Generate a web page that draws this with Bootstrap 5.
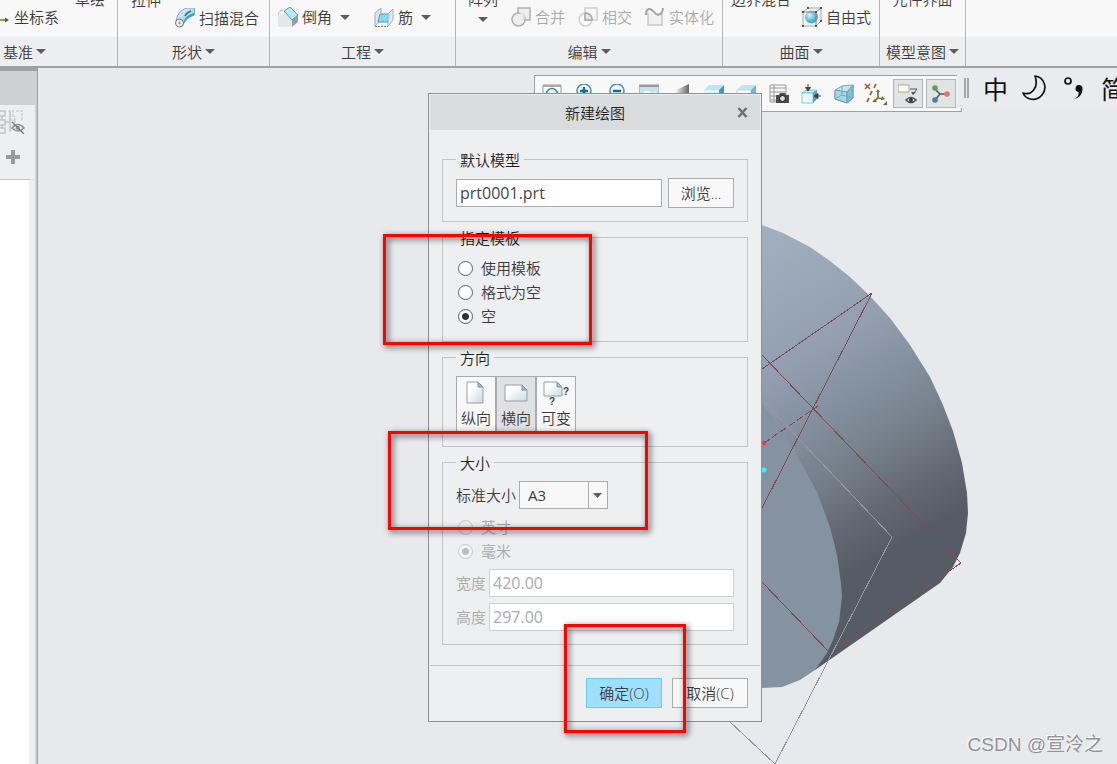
<!DOCTYPE html>
<html lang="zh-CN">
<head>
<meta charset="utf-8">
<meta name="viewport" content="width=device-width, initial-scale=1">
<title>新建绘图</title>
<link href="https://cdn.jsdelivr.net/npm/bootstrap@5.3.0/dist/css/bootstrap.min.css" rel="stylesheet">
<style>
  body { font: 350 15px/22px "Open Sans", "Noto Sans CJK SC", sans-serif; color: #3c3c3e; background: #e8e9ed; }
  button { font: inherit; color: inherit; }
  svg { flex: none; display: block; }

  /* ribbon */
  .ribbon { background: #f8f8f8; border-bottom: 2px solid #a0a0a2; font-family: "Noto Sans CJK SC", sans-serif; white-space: nowrap; }
  .ribbon-group { border-right: 1px solid #b4b5b7; flex: none; }
  .ribbon-tools { height: 37px; padding-bottom: 9px; overflow: hidden; }
  .ribbon-title { height: 29px; background: #edeef0; width: 100%; }
  .ribbon button { border: 0; padding: 0; background: none; display: flex; align-items: center; justify-content: center; height: 22px; gap: 4px; }
  .ribbon button.ribbon-title { height: 29px; background: #edeef0; gap: 3px; }
  .ribbon button.ribbon-first { justify-content: flex-start; padding-left: 3px; }
  .ribbon button.ribbon-cut { height: 14px; margin-bottom: 22px; }
  .ribbon button.ribbon-arrowed { gap: 8px; }
  .ribbon button:disabled { color: #a9aaab; }
  .tools-pad { padding: 0 10px 0 13px; }
  .w-datum { width: 118px; } .w-shape { width: 152px; } .w-eng { width: 186px; }
  .w-edit { width: 267px; } .w-surf { width: 157px; } .w-intent { width: 86px; }
  .caret { width: 0; height: 0; border: 5px solid transparent; border-top: 5px solid #5c5d5f; border-bottom: 0; }

  /* work area */
  .stage { flex: 1 0 auto; min-height: 696px; }
  .tree-panel { width: 38px; border-right: 1px solid #a0a1a3; background: #cfd0d2; border-top: 3px solid #a0a0a2; }
  .tree-tools { height: 74px; margin-top: 34px; margin-right: 2px; background: #eeeff1; padding-top: 5px; }
  .tree-tools button { border: 0; padding: 0; background: none; }
  .tree-list { margin-right: 2px; border-right: 6px solid #eeeff1; background: #fff; border-top: 1px solid #c6c7c9; }
  .viewport { overflow: hidden; }
  .model { position: absolute; left: 0; top: 0; }
  .view-bar { position: absolute; left: 496px; top: 7px; width: 428px; height: 37px; background: #f8f8f8; border: 1px solid #a0a0a2; padding: 0 5px 0 2px; }
  .view-bar button { border: 1px solid transparent; background: none; padding: 0; width: 30px; height: 29px; display: flex; align-items: center; justify-content: center; }
  .view-bar button.is-on { background: #e2e3e5; border-color: #b4b5b7; }
  .ime-bar { position: absolute; left: 919px; right: 0; top: 2px; height: 38px; background: #eaebee; color: #111; font: 400 25px/38px "Noto Sans CJK SC", sans-serif; overflow: hidden; white-space: nowrap; padding: 0 0 3px 7px; }
  .ime-grip { width: 5px; height: 20px; border: solid #a6a7a9; border-width: 0 2px; }
  .ime-gap { margin-left: 14px; }
  .stamp { position: absolute; right: 14px; bottom: 8px; font: 400 19px/22px "Liberation Sans", "Noto Sans CJK SC", sans-serif; color: #929398; text-shadow: -1px -1px 0 #fff; }

  /* dialog */
  .draw-dialog { position: absolute; left: 390px; top: 25px; width: 334px; background: #eeeff1; border: 1px solid #8f9193; padding: 1px; }
  .dialog-title { height: 35px; background: #d9dcdd; color: #1e1e20; font-size: 15px; position: relative; }
  .dialog-close { position: absolute; right: 12px; top: 12px; border: 0; padding: 0; background: none; }
  .dialog-body { padding: 18px 12px 20px; }
  .option-box { border: 1px solid #c3c5c8; padding: 8px 13px 13px; margin: 0 0 4px; }
  .option-box:last-child { margin-bottom: 0; }
  .option-box legend { float: none; width: auto; padding: 2px 4px 0; margin: 0; font-size: 15px; line-height: 20px; color: #1e1e20; }
  .field { height: 28px; border: 1px solid #a9abad; border-radius: 0; padding: 0 3px; font: 400 16px/26px "Open Sans", sans-serif; color: #46474a; min-width: 0; background: #fff; }
  .field:disabled { border-color: #cfd0d2; color: #a9aaab; background: #fff; }
  .push { height: 30px; border: 1px solid #a9abad; border-radius: 0; background: #f8f8f8; padding: 0; color: #3c3c3e; }
  .push-ok { background: #a0e0ff; border-color: #68ccf8; }
  .w-browse { width: 66px; margin-left: 6px; } .w-action { width: 76px; }
  .pick { height: 24px; gap: 8px; padding-left: 2px; }
  .pick input { appearance: none; width: 15px; height: 15px; margin: 0; border: 1px solid #5c5d5f; border-radius: 50%; background: #fff; flex: none; }
  .pick input:checked { background: radial-gradient(circle, #333 0 3px, #fff 4px); }
  .pick input:disabled { border-color: #c6c7c9; background: #eeeff1; }
  .pick input:disabled:checked { background: radial-gradient(circle, #bcbdbf 0 3px, #f4f4f6 4px); }
  .is-dim { color: #a9aaab; }
  .orient button { width: 40px; height: 57px; border: 1px solid #a9abad; background: #f8f8f8; padding: 3px 0 0; display: flex; flex-direction: column; align-items: center; gap: 1px; }
  .orient button.is-on { background: #e0e1e3; }
  .size-row { gap: 3px; }
  .size-row + .size-row { margin-top: 6px; }
  .size-top { gap: 3px; margin-bottom: 6px; }
  .size-values { margin-top: 6px; }
  .paper { width: 89px; height: 28px; appearance: none; border: 1px solid #a9abad; border-radius: 0; font: 400 15px/26px "Open Sans", sans-serif; color: #3c3c3e; padding: 0 20px 0 8px;
    background: #f8f8f8 url("data:image/svg+xml,%3Csvg xmlns='http://www.w3.org/2000/svg' width='19' height='26'%3E%3Cpath d='M0 0h1v26H0z' fill='%23a9abad'/%3E%3Cpath d='M5 11h9l-4.500 5z' fill='%235c5d5f'/%3E%3C/svg%3E") right top no-repeat; }
  .dialog-actions { border-top: 1px solid #c3c5c8; padding: 12px; gap: 10px; }

  /* callout frames */
  .callout { position: absolute; border: 3px solid #f00; filter: drop-shadow(2px 2px 3px rgba(0,0,0,.75)); pointer-events: none; }
  .callout-template { left: 345px; top: 166px; width: 209px; height: 111px; }
  .callout-size { left: 350px; top: 363px; width: 260px; height: 99px; }
  .callout-ok { left: 526px; top: 556px; width: 122px; height: 109px; }
</style>
</head>
<body class="d-flex flex-column min-vh-100 overflow-hidden">

<svg width="0" height="0" class="position-absolute" aria-hidden="true">
  <defs>
    <linearGradient id="ice" x1="0" y1="0" x2="1" y2="1"><stop offset="0" stop-color="#e4f7fd"/><stop offset="1" stop-color="#7cc3de"/></linearGradient>
    <linearGradient id="sheet" x1="0" y1="0" x2="1" y2="1"><stop offset=".3" stop-color="#fff"/><stop offset="1" stop-color="#c4dbe5"/></linearGradient>
    <linearGradient id="metal" x1="0" y1="0" x2="1" y2="0"><stop offset="0" stop-color="#eee"/><stop offset="1" stop-color="#666"/></linearGradient>
    <radialGradient id="ball" cx=".35" cy=".35"><stop offset="0" stop-color="#d8f5ff"/><stop offset="1" stop-color="#4bb0d6"/></radialGradient>
  </defs>
</svg>

<header class="ribbon d-flex overflow-hidden">
  <section class="ribbon-group w-datum">
    <div class="ribbon-tools d-flex align-items-end">
      <button type="button"><svg width="10" height="20" viewBox="0 0 10 20"><path d="M0 13H6" stroke="#8a6d2f" stroke-width="1.500"/><path d="M5 10.500L9 13 5 15.500z" fill="#6a531f"/></svg>坐标系</button>
      <button type="button" class="ribbon-cut ms-3">草绘</button>
    </div>
    <button type="button" class="ribbon-title ribbon-first">基准<span class="caret"></span></button>
  </section>
  <section class="ribbon-group w-shape">
    <div class="ribbon-tools tools-pad d-flex align-items-end justify-content-between pb-2">
      <button type="button" class="ribbon-cut">拉伸</button>
      <button type="button"><svg width="20" height="20" viewBox="0 0 20 20"><path d="M1 13C2 6 7 0 14 0h5.500v6C14 7 11 11 8 17z" fill="url(#ice)" stroke="#7fb0c4"/><path d="M8 15C10 9 14 6 19.500 5v2.500C14 9 11 12 8 17z" fill="#4a9dbf"/><path d="M10 8c1-2 3-4 6-5" fill="none" stroke="#2f6f8b" stroke-width="1.500"/><circle cx="4.500" cy="15" r="4" fill="#f2f2f2" stroke="#777"/><path d="M4.500 13.500v3M3 15h3" stroke="#888" stroke-width=".8"/></svg>扫描混合</button>
    </div>
    <button type="button" class="ribbon-title">形状<span class="caret"></span></button>
  </section>
  <section class="ribbon-group w-eng">
    <div class="ribbon-tools d-flex align-items-end justify-content-between ps-2 pe-4">
      <button type="button" class="ribbon-arrowed"><span class="d-flex align-items-center gap-1"><svg width="20" height="20" viewBox="0 0 20 20"><path d="M0 7h9l5 6v7H0z" fill="#e5e6e7"/><path d="M14 13l6-5v7l-6 5z" fill="#9b9da0"/><path d="M6 4l6-4 8 8-6 5z" fill="#b4eafb" stroke="#4d9dba"/><path d="M0 7L3 3M3 3h2" stroke="#aaa" stroke-dasharray="2 1"/></svg>倒角</span><span class="caret"></span></button>
      <button type="button" class="ribbon-arrowed"><span class="d-flex align-items-center gap-1"><svg width="20" height="20" viewBox="0 0 20 20"><path d="M1 6l6-5v12l-6 6z" fill="#dfe5e8" stroke="#a5b0b5"/><path d="M6 7h11l-3 8H4z" fill="#85d9f3" stroke="#4b9dbd"/><path d="M14 7l5-5v11l-5 6z" fill="#d9eef5" fill-opacity=".8" stroke="#a5b0b5"/><path d="M1 19.500h13" stroke="#777" stroke-dasharray="2 1"/></svg>筋</span><span class="caret"></span></button>
    </div>
    <button type="button" class="ribbon-title">工程<span class="caret"></span></button>
  </section>
  <section class="ribbon-group w-edit">
    <div class="ribbon-tools d-flex align-items-end justify-content-between px-2">
      <div class="d-flex flex-column align-items-center ms-1">
        <button type="button" class="ribbon-cut mb-0">阵列</button>
        <button type="button" aria-label="阵列选项"><span class="caret mt-1"></span></button>
      </div>
      <button type="button" disabled><svg width="20" height="20" viewBox="0 0 20 20" fill="#eee" stroke="#b0b0b0" stroke-width="1.500"><path d="M7 1h12v12H7z"/><circle cx="7.500" cy="12.500" r="6.500"/><path d="M8 7h5v5" stroke="#ddd"/></svg>合并</button>
      <button type="button" disabled><svg width="20" height="20" viewBox="0 0 20 20" fill="none" stroke="#d0d0d0" stroke-width="1.500"><path d="M7 1h12v12H7z"/><circle cx="7.500" cy="12.500" r="6.500"/><path d="M7 6a6.500 6.500 0 0 1 7 7H7z" fill="#e4e4e4" stroke="#aaa"/></svg>相交</button>
      <button type="button" disabled><svg width="20" height="20" viewBox="0 0 20 20"><path d="M3 6v12h14V5" fill="#f0f0f0" stroke="#c8c8c8" stroke-width="1.500"/><path d="M1 8C1 0 6 1 9 5s8 4 9-4" fill="none" stroke="#a2a2a2" stroke-width="2"/></svg>实体化</button>
    </div>
    <button type="button" class="ribbon-title">编辑<span class="caret"></span></button>
  </section>
  <section class="ribbon-group w-surf">
    <div class="ribbon-tools d-flex align-items-end justify-content-between px-2">
      <button type="button" class="ribbon-cut">边界混合</button>
      <button type="button"><svg width="20" height="20" viewBox="0 0 20 20"><path d="M1 5l5-4h13v13l-5 5H1z" fill="#f4f4f4" stroke="#aaa"/><circle cx="9.500" cy="10" r="6.500" fill="url(#ball)"/><path d="M1 5h13v14M14 5l5-4" fill="none" stroke="#888"/><path d="M0 4h2v2H0zM13 4h2v2h-2zM18 0h2v2h-2zM5 0h2v2H5zM0 18h2v2H0zM13 18h2v2h-2zM18 13h2v2h-2z" fill="#555"/></svg>自由式</button>
    </div>
    <button type="button" class="ribbon-title">曲面<span class="caret"></span></button>
  </section>
  <section class="ribbon-group w-intent">
    <div class="ribbon-tools d-flex align-items-end justify-content-center">
      <button type="button" class="ribbon-cut">元件界面</button>
    </div>
    <button type="button" class="ribbon-title">模型意图<span class="caret"></span></button>
  </section>
  <div class="flex-grow-1 d-flex flex-column"><div class="ribbon-tools"></div><div class="ribbon-title"></div></div>
</header>

<main class="stage d-flex">
  <aside class="tree-panel d-flex flex-column flex-shrink-0">
    <div class="tree-tools d-flex flex-column align-items-start gap-3">
      <button type="button" aria-label="显示"><svg width="25" height="24" viewBox="0 0 25 24" fill="none"><path d="M0 1h5v5H0M0 10h5v5H0M0 18h5v5H0M2 6v4M2 15v3M5 12h5M10 1v21" stroke="#c2c3c5" stroke-width="1.500"/><path d="M8 1h5v6M16 1h6v10M10 10h5v-4M15 10v10" stroke="#d0d1d3" stroke-width="1.500" stroke-dasharray="3 1"/><path d="M12 18q6-7 12 0-6 6-12 0z" stroke="#8e9092" stroke-width="1.500"/><circle cx="18" cy="18" r="2" fill="#8e9092"/><path d="M12 12l12 12" stroke="#77797b" stroke-width="1.200"/></svg></button>
      <button type="button" class="ms-1" aria-label="添加"><svg width="18" height="14" viewBox="0 0 18 14"><path d="M9 0v14M2 7h14" stroke="#98999b" stroke-width="4"/></svg></button>
    </div>
    <div class="tree-list flex-grow-1"></div>
  </aside>

  <div class="viewport flex-grow-1 position-relative">
    <svg class="model" width="1079" height="696" viewBox="38 68 1079 696" role="img" aria-label="模型">
      <defs>
        <linearGradient id="side" gradientUnits="userSpaceOnUse" x1="770" y1="240" x2="934" y2="524">
          <stop offset="0" stop-color="#a0aebd"/><stop offset=".36" stop-color="#939fb1"/><stop offset=".62" stop-color="#7c8995"/><stop offset=".74" stop-color="#717c87"/><stop offset=".87" stop-color="#646874"/><stop offset="1" stop-color="#565c66"/>
        </linearGradient>
      </defs>
      <path fill="url(#side)" d="M700 210L762 225L783 233L810 247L830 261L850 277L870 296L890 318L910 345L930 377L943 405L953 431L962 463L967 493L968 513L966 533L960 553L953 567L940 583L815 670L700 670z"/>
      <path fill="#8592a0" d="M740 375L762 403L783 433L795 452L805 470L817 492L830 527L837 555L841 583L842 597L839 622L833 640L827 653L815 670L800 680L782 687L762 688L740 688z"/>
      <g fill="none" stroke="#7d4c57" shape-rendering="crispEdges">
        <path d="M762 369L872 293L762 508M762 355L961 563L830 653L762 582"/>
        <path d="M764 443L818 406" stroke-dasharray="7 3"/>
      </g>
      <path d="M762 400L800 440" fill="none" stroke="#939fac"/>
      <path d="M800 440L892 537L775 764L729 721" fill="none" stroke="#9596a0" shape-rendering="crispEdges"/>
      <circle cx="764" cy="443" r="2" fill="#ff3030"/><circle cx="764" cy="470" r="2.500" fill="#35f6ff"/>
    </svg>

    <div class="view-bar d-flex align-items-center justify-content-between">
      <button type="button" aria-label="重新调整"><svg width="20" height="20" viewBox="0 0 20 20"><path d="M1 1h18v18H1z" fill="#fff" stroke="#999"/><path d="M1 1h18v2H1z" fill="#aaa"/><circle cx="10" cy="10" r="5.500" fill="#eefaff" stroke="#3b89ad" stroke-width="1.500"/></svg></button>
      <button type="button" aria-label="放大"><svg width="20" height="20" viewBox="0 0 20 20"><circle cx="10" cy="7" r="7" fill="#effaff" stroke="#4a8ca9" stroke-width="1.500"/><path d="M10 3v8M6 7h8" stroke="#146c94" stroke-width="2.500"/></svg></button>
      <button type="button" aria-label="缩小"><svg width="20" height="20" viewBox="0 0 20 20"><circle cx="10" cy="7" r="7" fill="#effaff" stroke="#4a8ca9" stroke-width="1.500"/><path d="M6 7h8" stroke="#146c94" stroke-width="2.500"/></svg></button>
      <button type="button" aria-label="重画"><svg width="20" height="20" viewBox="0 0 20 20"><path d="M0 1h20v18H0z" fill="#bfe5f2" stroke="#999"/><path d="M0 1h20v2H0z" fill="#999"/><path d="M1 12q6-8 12-3l4-1v8H1z" fill="#fff"/></svg></button>
      <button type="button" aria-label="渲染"><svg width="20" height="20" viewBox="0 0 20 20"><path d="M4 6L17 0v18l-4-8H6z" fill="url(#metal)"/></svg></button>
      <button type="button" aria-label="显示样式"><svg width="20" height="20" viewBox="0 0 20 20"><path d="M0 6l5-5h15l-5 5z" fill="#b9e8f6"/><path d="M0 6h15v13H0z" fill="#dff5fb"/><path d="M15 6l5-5v13l-5 5z" fill="#3e9cc0"/></svg></button>
      <button type="button" aria-label="已保存方向"><svg width="20" height="20" viewBox="0 0 20 20"><path d="M1 6l5-5h14l-5 5z" fill="#b9e8f6"/><path d="M1 6h14v12H1z" fill="#fff" stroke="#ccd"/><path d="M15 6l5-5v12l-5 5z" fill="#6db5d0"/></svg></button>
      <button type="button" aria-label="视图管理器"><svg width="20" height="20" viewBox="0 0 20 20"><path d="M1 1h16v17H1zM1 4h16M1 8h16M1 12h9M1 16h8M5 1v17" fill="none" stroke="#999"/><path d="M7 11h3l1-2h5l1 2h3v8H7z" fill="#4b4c4e"/><circle cx="13.500" cy="14.500" r="3" fill="#ddd" stroke="#111"/></svg></button>
      <button type="button" aria-label="标准方向"><svg width="20" height="20" viewBox="0 0 20 20"><path d="M1 9l4-3h11l-4 3z" fill="#b9e8f6" stroke="#8cc5d8"/><path d="M1 9h11v10H1z" fill="#e8f8fc" stroke="#8cc5d8"/><path d="M12 9l4-3v9l-4 4z" fill="#4da3c2"/><path d="M7 0v6M4.500 3.500L7 7l2.500-3.500zM20 12h-5M17 9.500L13 12l4 2.500z" fill="#444" stroke="#444"/></svg></button>
      <button type="button" aria-label="透视图"><svg width="20" height="20" viewBox="0 0 20 20"><path d="M1 6L8 2 19 1v13l-6 5L1 15z" fill="#c0e6f1" stroke="#7ba9b9"/><path d="M1 6l12 2v11L1 15z" fill="#a4d8e8" stroke="#6e9dae"/><path d="M13 8l6-7v13l-6 5z" fill="#7fc0d6" stroke="#6e9dae"/><path d="M1 15l7-4 11 3M8 2v9" fill="none" stroke="#7ba9b9"/></svg></button>
      <button type="button" aria-label="基准显示"><svg width="24" height="22" viewBox="0 0 24 22"><path d="M1 1l5 5M6 1L1 6M12 1l-2 4M8 8l-2 4M5 15l-2 4M14 9v6l-4 3M14 15l6 1" stroke="#8a6d35" stroke-width="1.700" fill="none"/><path d="M12 9l2-3 2 3zM18 13l3 3-4 1zM11 16l-3 3 5 0z" fill="#8a6d35"/><path d="M23 18v4h-4z" fill="#666"/></svg></button>
      <button type="button" class="is-on" aria-label="注释显示"><svg width="20" height="20" viewBox="0 0 20 20"><path d="M0 1h11v7H0z" fill="#fffbe6" stroke="#aaa"/><path d="M12 5h7l-3 4" fill="none" stroke="#555"/><path d="M13 8h5l-3 3z" fill="#555"/><path d="M8 16q5-5 10 0-5 5-10 0z" fill="#eee" stroke="#444" stroke-width="1.500"/><circle cx="13" cy="16" r="2" fill="#333"/></svg></button>
      <button type="button" class="is-on" aria-label="旋转中心"><svg width="20" height="20" viewBox="0 0 20 20"><path d="M3 4l6 6-5 6M9 10h7" fill="none" stroke="#555" stroke-width="1.500"/><circle cx="4" cy="4" r="2.800" fill="#5c9e5e"/><circle cx="4" cy="16" r="2.800" fill="#3f84ab"/><circle cx="16" cy="10" r="2.800" fill="#e0766c"/></svg></button>
    </div>

    <div class="ime-bar d-flex align-items-center">
      <span class="ime-grip flex-shrink-0"></span>
      <span class="ime-gap">中</span>
      <svg class="ime-gap" width="25" height="26" viewBox="0 0 25 26"><path d="M13 1C22 2 26 13 20 20 14 27 4 25 1 18 10 21 17 12 13 1z" fill="none" stroke="#111" stroke-width="1.700" stroke-linejoin="round"/></svg>
      <svg class="ime-gap" width="24" height="26" viewBox="0 0 24 26"><circle cx="7" cy="6" r="3" fill="none" stroke="#111" stroke-width="1.700"/><path d="M13 24c4-2 5-4 4.500-7a3.500 3.500 0 1 1 4-3c0 5-3 9-8.500 10z" fill="#111"/></svg>
      <span class="ms-3">简</span>
    </div>

    <form class="draw-dialog" role="dialog" aria-labelledby="dialogName">
      <div class="dialog-title d-flex align-items-center justify-content-center">
        <span id="dialogName">新建绘图</span>
        <button type="button" class="dialog-close" aria-label="关闭"><svg width="11" height="11" viewBox="0 0 11 11"><path d="M1.500 1l8 9M9.500 1l-8 9" stroke="#6d6f71" stroke-width="2.500"/></svg></button>
      </div>
      <div class="dialog-body">
        <fieldset class="option-box">
          <legend>默认模型</legend>
          <div class="d-flex align-items-center">
            <input class="field flex-grow-1" type="text" value="prt0001.prt" aria-label="默认模型">
            <button type="button" class="push w-browse flex-shrink-0">浏览...</button>
          </div>
        </fieldset>
        <fieldset class="option-box">
          <legend>指定模板</legend>
          <label class="pick d-flex align-items-center"><input type="radio" name="template">使用模板</label>
          <label class="pick d-flex align-items-center"><input type="radio" name="template">格式为空</label>
          <label class="pick d-flex align-items-center"><input type="radio" name="template" checked>空</label>
        </fieldset>
        <fieldset class="option-box">
          <legend>方向</legend>
          <div class="orient d-flex">
            <button type="button"><svg width="26" height="26" viewBox="0 0 26 26"><path d="M4 2h11l5 5v16H4z" fill="url(#sheet)" stroke="#9a9fa3"/><path d="M15 2v5h5z" fill="#a9b7be" stroke="#8b959b"/></svg>纵向</button>
            <button type="button" class="is-on"><svg width="26" height="26" viewBox="0 0 26 26"><path d="M2 5h17l5 5v11H2z" fill="url(#sheet)" stroke="#9a9fa3"/><path d="M19 5v5h5z" fill="#a9b7be" stroke="#8b959b"/></svg>横向</button>
            <button type="button"><svg width="26" height="26" viewBox="0 0 26 26"><path d="M1 2h13l5 5v9H1z" fill="url(#sheet)" stroke="#9a9fa3"/><path d="M14 2v5h5z" fill="#a9b7be" stroke="#8b959b"/><text x="20" y="15" font-family="Liberation Sans" font-size="10" font-weight="700" fill="#444">?</text><text x="6" y="25" font-family="Liberation Sans" font-size="10" font-weight="700" fill="#444">?</text></svg>可变</button>
          </div>
        </fieldset>
        <fieldset class="option-box">
          <legend>大小</legend>
          <div class="size-top d-flex align-items-center">
            <label for="paperSize">标准大小</label>
            <select id="paperSize" class="paper"><option>A3</option></select>
          </div>
          <label class="pick is-dim d-flex align-items-center"><input type="radio" name="unit" disabled>英寸</label>
          <label class="pick is-dim d-flex align-items-center"><input type="radio" name="unit" disabled checked>毫米</label>
          <div class="size-values">
            <div class="size-row d-flex align-items-center is-dim">
              <label for="paperWidth">宽度</label><input id="paperWidth" class="field flex-grow-1" type="text" value="420.00" disabled>
            </div>
            <div class="size-row d-flex align-items-center is-dim">
              <label for="paperHeight">高度</label><input id="paperHeight" class="field flex-grow-1" type="text" value="297.00" disabled>
            </div>
          </div>
        </fieldset>
      </div>
      <div class="dialog-actions d-flex justify-content-end">
        <button type="submit" class="push push-ok w-action">确定(O)</button>
        <button type="button" class="push w-action">取消(C)</button>
      </div>
    </form>

    <div class="callout callout-template"></div>
    <div class="callout callout-size"></div>
    <div class="callout callout-ok"></div>
    <div class="stamp">CSDN @宣泠之</div>
  </div>
</main>
<script src="https://cdn.jsdelivr.net/npm/bootstrap@5.3.0/dist/js/bootstrap.bundle.min.js"></script>
</body>
</html>
